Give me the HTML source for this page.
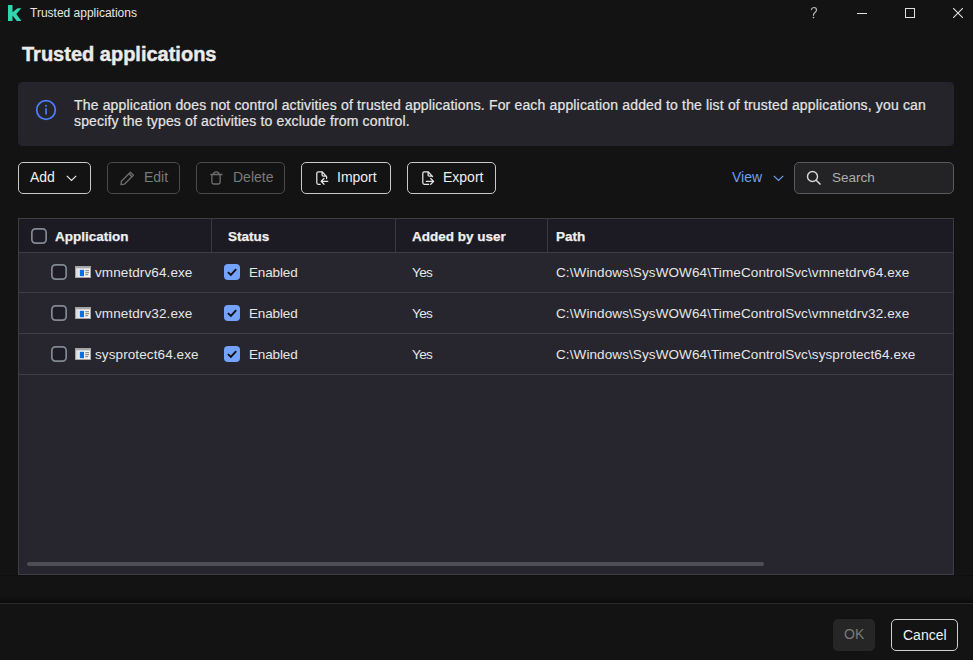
<!DOCTYPE html>
<html><head><meta charset="utf-8">
<style>
*{box-sizing:border-box;margin:0;padding:0}
html,body{width:973px;height:660px;overflow:hidden;background:#131313;font-family:"Liberation Sans",sans-serif;color:#e8e8e8}
.abs{position:absolute}
.t{position:absolute;white-space:nowrap;line-height:1}
#wtitle{left:30px;top:6px;font-size:12px;line-height:14px;color:#e6e6e6}
#h1{left:22px;top:43px;font-size:20px;line-height:23px;font-weight:bold;color:#ebebeb;-webkit-text-stroke:0.45px #ebebeb}
#info{left:18px;top:82px;width:936px;height:64px;background:#25242b;border-radius:4.5px}
#infotext{left:74px;top:98px;font-size:14px;line-height:15.5px;letter-spacing:0.16px;color:#e4e4e4;-webkit-text-stroke:0.2px #e4e4e4}
.btn{position:absolute;top:162px;height:32px;border:1px solid #c9c9c9;border-radius:5px;font-size:14px;color:#eeeeee;white-space:nowrap}
.btn.dis{border-color:#4a4a4a;color:#7a7a7a}
.btn span{position:absolute;top:6px;line-height:16px}
.btn svg{position:absolute}
#search{left:794px;top:162px;width:160px;height:32px;border:1px solid #5a5a5e;border-radius:5px;background:#232325}
#table{left:18px;top:218px;width:936px;height:357px;border:1px solid #3d3d42;background:#27262f}
#thead{left:19px;top:219px;width:934px;height:33px;background:#1c1b24}
.hline{position:absolute;left:19px;width:934px;height:1px;background:#3f3e46}
.vline{position:absolute;top:219px;width:1px;height:33px;background:#3a3942}
.th{position:absolute;top:229px;font-size:13.5px;line-height:16px;font-weight:bold;color:#f0f0f0;white-space:nowrap;-webkit-text-stroke:0.25px #f0f0f0}
.td{position:absolute;font-size:13.5px;line-height:16px;color:#e6e6e6;white-space:nowrap}
.ls{letter-spacing:0.1px}
.cb{position:absolute;width:16px;height:16px}
.cbon{position:absolute;width:16px;height:16px;border-radius:4px;background:#74a2ff}
#scroll{left:27px;top:562px;width:737px;height:4px;border-radius:2px;background:#4f4e58}
#footline{left:0;top:603px;width:973px;height:1px;background:#2a2a2a}
#ok{left:833px;top:619px;width:42px;height:32px;border-radius:5px;background:#262626;color:#7a7a7a;font-size:14px}
#cancel{left:891px;top:619px;width:67px;height:32px;border-radius:5px;border:1px solid #d0d0d0;color:#f2f2f2;font-size:14px}
</style></head><body>
<svg class="abs" style="left:0;top:0" width="26" height="26" viewBox="0 0 26 26"><path d="M8 5H12.5V12.2L17.6 8.2H21.4L16.3 14.1L21.4 21H16.8L12.5 15.4V21H8Z" fill="#2fd6ae"/></svg>
<div class="t" id="wtitle">Trusted applications</div>
<svg class="abs" style="left:806px;top:4px" width="16" height="16" viewBox="0 0 16 16"><path d="M5.3 5.6C5.6 4.2 6.7 3.5 8 3.5C9.5 3.5 10.5 4.6 10.5 5.9C10.5 7.6 8.9 8.4 8.1 9.4C7.6 10 7.5 10.6 7.5 11.3" fill="none" stroke="#bdbdbd" stroke-width="1.15" stroke-linecap="round"/><circle cx="7.5" cy="13.6" r="0.8" fill="#bdbdbd"/></svg>
<div class="abs" style="left:857px;top:13px;width:10px;height:1px;background:#e0e0e0"></div>
<div class="abs" style="left:905px;top:8px;width:10px;height:10px;border:1px solid #e0e0e0"></div>
<svg class="abs" style="left:953px;top:8px" width="10" height="10" viewBox="0 0 10 10"><path d="M0 0L10 10M10 0L0 10" stroke="#e0e0e0" stroke-width="1.1"/></svg>
<div class="t" id="h1">Trusted applications</div>
<div class="abs" id="info"></div>
<svg class="abs" style="left:35px;top:99px" width="22" height="22" viewBox="0 0 22 22"><circle cx="11" cy="11" r="9.3" fill="none" stroke="#4b7ef5" stroke-width="1.8"/><rect x="10.2" y="9.3" width="1.7" height="6.2" fill="#4b7ef5"/><circle cx="11" cy="6.8" r="1" fill="#4b7ef5"/></svg>
<div class="t" id="infotext">The application does not control activities of trusted applications. For each application added to the list of trusted applications, you can<br>specify the types of activities to exclude from control.</div>
<div class="btn" style="left:18px;width:73px"><span style="left:11px">Add</span><svg style="left:47px;top:12px" width="11" height="7" viewBox="0 0 11 7"><path d="M0.8 0.8L5.5 5.5L10.2 0.8" fill="none" stroke="#e8e8e8" stroke-width="1.2"/></svg></div>
<div class="btn dis" style="left:107px;width:73px"><span style="left:36px">Edit</span><svg style="left:12px;top:8px" width="15" height="15" viewBox="0 0 15 15"><path d="M1 13.6L1.4 10.2L10.4 1.2L13.4 4.2L4.4 13.2z M8.9 2.7L11.9 5.7" fill="none" stroke="#6e6e6e" stroke-width="1.3" stroke-linejoin="round"/></svg></div>
<div class="btn dis" style="left:196px;width:89px"><span style="left:36px">Delete</span><svg style="left:13px;top:8px" width="14" height="16" viewBox="0 0 14 16"><path d="M0.4 3.5H12.4 M3.4 3.5A2.8 2.7 0 0 1 9 3.5 M1.9 3.5V11.3Q1.9 13 3.6 13H8.4Q10.1 13 10.1 11.3V3.5" fill="none" stroke="#6e6e6e" stroke-width="1.3" stroke-linejoin="round"/></svg></div>
<div class="btn" style="left:301px;width:90px"><span style="left:35px">Import</span><svg style="left:13px;top:8px" width="15" height="16" viewBox="0 0 15 16"><path d="M7.3 0.8H3.3Q1.8 0.8 1.8 2.3V11.8Q1.8 13.3 3.3 13.3H5.2 M7.1 0.8L11.6 5.6V7.6 M7.1 0.8V4.1Q7.1 5.2 8.2 5.2H11.4 M12.8 10.3H6.2 M9 7.5L6.2 10.3L9 13.2" fill="none" stroke="#e6e6e6" stroke-width="1.25" stroke-linejoin="round" stroke-linecap="round"/></svg></div>
<div class="btn" style="left:407px;width:89px"><span style="left:35px">Export</span><svg style="left:13px;top:8px" width="15" height="16" viewBox="0 0 15 16"><path d="M7.3 0.8H3.3Q1.8 0.8 1.8 2.3V11.8Q1.8 13.3 3.3 13.3H7.7 M7.1 0.8L11.6 5.6 M7.1 0.8V4.1Q7.1 5.2 8.2 5.2H11.4 M5.4 10.4H12.6 M9.7 7.5L12.6 10.4L9.7 13.3" fill="none" stroke="#e6e6e6" stroke-width="1.25" stroke-linejoin="round" stroke-linecap="round"/></svg></div>
<div class="t" style="left:732px;top:169px;font-size:14px;line-height:16px;color:#6f9ff5">View</div>
<svg class="abs" style="left:773px;top:175px" width="11" height="7" viewBox="0 0 11 7"><path d="M0.8 0.8L5.5 5.5L10.2 0.8" fill="none" stroke="#6f9ff5" stroke-width="1.2"/></svg>
<div class="abs" id="search"></div>
<svg class="abs" style="left:806px;top:170px" width="16" height="16" viewBox="0 0 16 16"><circle cx="6.5" cy="6.5" r="5" fill="none" stroke="#d8d8d8" stroke-width="1.4"/><path d="M10.2 10.2L14.5 14.5" stroke="#d8d8d8" stroke-width="1.5"/></svg>
<div class="t" style="left:832px;top:170px;font-size:13.5px;line-height:16px;color:#adadad">Search</div>
<div class="abs" id="table"></div>
<div class="abs" id="thead"></div>
<div class="hline" style="top:252px"></div>
<div class="hline" style="top:292px"></div>
<div class="hline" style="top:333px"></div>
<div class="hline" style="top:374px"></div>
<div class="vline" style="left:211px"></div>
<div class="vline" style="left:395px"></div>
<div class="vline" style="left:547px"></div>
<div class="cb" style="left:31px;top:228px"><svg width="16" height="16" viewBox="0 0 16 16"><rect x="0.85" y="0.85" width="14.3" height="14.3" rx="3.6" fill="#1d1c27" stroke="#838893" stroke-width="1.7"/></svg></div>
<div class="th" style="left:55px">Application</div>
<div class="th" style="left:228px">Status</div>
<div class="th" style="left:412px">Added by user</div>
<div class="th" style="left:556px">Path</div>
<div class="cb" style="left:51px;top:264px"><svg width="16" height="16" viewBox="0 0 16 16"><rect x="0.85" y="0.85" width="14.3" height="14.3" rx="3.6" fill="#1d1c27" stroke="#838893" stroke-width="1.7"/></svg></div>
<svg class="abs" style="left:75px;top:266px" width="16" height="12" viewBox="0 0 16 12"><rect x="0" y="0" width="16" height="12" fill="#a4a4a4"/><rect x="1" y="1" width="14" height="10" fill="#f3f3f3"/><rect x="1" y="1" width="14" height="1.4" fill="#a8a8a8"/><rect x="1" y="2.4" width="2.6" height="8.6" fill="#dedede"/><rect x="4.8" y="3.8" width="4.2" height="6.4" fill="#0b6fe3"/><rect x="10.2" y="4.2" width="3.8" height="1" fill="#7d7d7d"/><rect x="10.2" y="6.2" width="3.8" height="1" fill="#7d7d7d"/><rect x="10.2" y="8.2" width="3" height="1" fill="#7d7d7d"/></svg>
<div class="td ls" style="left:95px;top:265px">vmnetdrv64.exe</div>
<div class="cbon" style="left:224px;top:264px"><svg width="16" height="16" viewBox="0 0 16 16" style="position:absolute;left:0;top:0"><path d="M3.9 8.1L6.9 11L12.2 5.1" fill="none" stroke="#111" stroke-width="1.9"/></svg></div>
<div class="td" style="left:249px;top:265px;letter-spacing:-0.15px">Enabled</div>
<div class="td" style="left:412px;top:265px;letter-spacing:-0.6px">Yes</div>
<div class="td ls" style="left:556px;top:265px">C:\Windows\SysWOW64\TimeControlSvc\vmnetdrv64.exe</div>
<div class="cb" style="left:51px;top:305px"><svg width="16" height="16" viewBox="0 0 16 16"><rect x="0.85" y="0.85" width="14.3" height="14.3" rx="3.6" fill="#1d1c27" stroke="#838893" stroke-width="1.7"/></svg></div>
<svg class="abs" style="left:75px;top:307px" width="16" height="12" viewBox="0 0 16 12"><rect x="0" y="0" width="16" height="12" fill="#a4a4a4"/><rect x="1" y="1" width="14" height="10" fill="#f3f3f3"/><rect x="1" y="1" width="14" height="1.4" fill="#a8a8a8"/><rect x="1" y="2.4" width="2.6" height="8.6" fill="#dedede"/><rect x="4.8" y="3.8" width="4.2" height="6.4" fill="#0b6fe3"/><rect x="10.2" y="4.2" width="3.8" height="1" fill="#7d7d7d"/><rect x="10.2" y="6.2" width="3.8" height="1" fill="#7d7d7d"/><rect x="10.2" y="8.2" width="3" height="1" fill="#7d7d7d"/></svg>
<div class="td ls" style="left:95px;top:306px">vmnetdrv32.exe</div>
<div class="cbon" style="left:224px;top:305px"><svg width="16" height="16" viewBox="0 0 16 16" style="position:absolute;left:0;top:0"><path d="M3.9 8.1L6.9 11L12.2 5.1" fill="none" stroke="#111" stroke-width="1.9"/></svg></div>
<div class="td" style="left:249px;top:306px;letter-spacing:-0.15px">Enabled</div>
<div class="td" style="left:412px;top:306px;letter-spacing:-0.6px">Yes</div>
<div class="td ls" style="left:556px;top:306px">C:\Windows\SysWOW64\TimeControlSvc\vmnetdrv32.exe</div>
<div class="cb" style="left:51px;top:346px"><svg width="16" height="16" viewBox="0 0 16 16"><rect x="0.85" y="0.85" width="14.3" height="14.3" rx="3.6" fill="#1d1c27" stroke="#838893" stroke-width="1.7"/></svg></div>
<svg class="abs" style="left:75px;top:348px" width="16" height="12" viewBox="0 0 16 12"><rect x="0" y="0" width="16" height="12" fill="#a4a4a4"/><rect x="1" y="1" width="14" height="10" fill="#f3f3f3"/><rect x="1" y="1" width="14" height="1.4" fill="#a8a8a8"/><rect x="1" y="2.4" width="2.6" height="8.6" fill="#dedede"/><rect x="4.8" y="3.8" width="4.2" height="6.4" fill="#0b6fe3"/><rect x="10.2" y="4.2" width="3.8" height="1" fill="#7d7d7d"/><rect x="10.2" y="6.2" width="3.8" height="1" fill="#7d7d7d"/><rect x="10.2" y="8.2" width="3" height="1" fill="#7d7d7d"/></svg>
<div class="td ls" style="left:95px;top:347px">sysprotect64.exe</div>
<div class="cbon" style="left:224px;top:346px"><svg width="16" height="16" viewBox="0 0 16 16" style="position:absolute;left:0;top:0"><path d="M3.9 8.1L6.9 11L12.2 5.1" fill="none" stroke="#111" stroke-width="1.9"/></svg></div>
<div class="td" style="left:249px;top:347px;letter-spacing:-0.15px">Enabled</div>
<div class="td" style="left:412px;top:347px;letter-spacing:-0.6px">Yes</div>
<div class="td ls" style="left:556px;top:347px">C:\Windows\SysWOW64\TimeControlSvc\sysprotect64.exe</div>
<div class="abs" style="left:954px;top:218px;width:1px;height:358px;background:#0f0f0f"></div>
<div class="abs" id="scroll"></div>
<div class="abs" style="left:0;top:575px;width:973px;height:1px;background:#0f0f0f"></div>
<div class="abs" style="left:0;top:597px;width:973px;height:6px;background:linear-gradient(#131313,#0a0a0a)"></div>
<div class="abs" id="footline"></div>
<div class="abs" id="ok"><span class="t" style="left:11px;top:7px;line-height:16px">OK</span></div>
<div class="abs" id="cancel"><span class="t" style="left:11px;top:7px;line-height:16px">Cancel</span></div>
</body></html>
